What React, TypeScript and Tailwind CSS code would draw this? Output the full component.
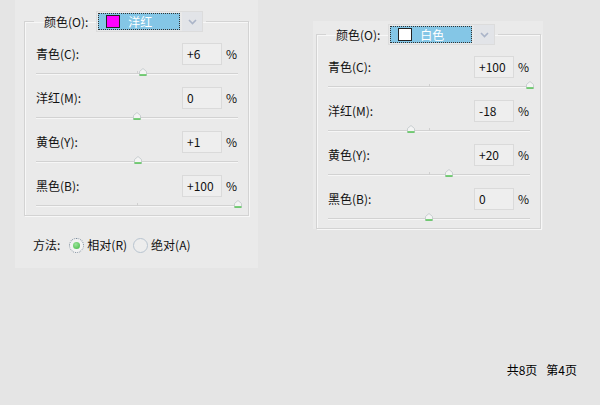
import type { ReactNode } from 'react'

const FONT = { fontFamily: '"Noto Sans CJK SC", "Liberation Sans", sans-serif' }

type Row = { label: string; value: string; pct: number }

const leftRows: Row[] = [
  { label: '青色(C):', value: '+6', pct: 6 },
  { label: '洋红(M):', value: '0', pct: 0 },
  { label: '黄色(Y):', value: '+1', pct: 1 },
  { label: '黑色(B):', value: '+100', pct: 100 },
]

const rightRows: Row[] = [
  { label: '青色(C):', value: '+100', pct: 100 },
  { label: '洋红(M):', value: '-18', pct: -18 },
  { label: '黄色(Y):', value: '+20', pct: 20 },
  { label: '黑色(B):', value: '0', pct: 0 },
]

function Thumb() {
  return (
    <svg width="10" height="10" viewBox="0 0 10 10">
      <path d="M1.5 8.5 V4.5 L5 1.5 L8.5 4.5 V8.5 Z" fill="#f4f4f4" stroke="#c8ced0" />
      <line x1="1.5" y1="8" x2="8.5" y2="8" stroke="#5cc65c" strokeWidth="1.6" />
    </svg>
  )
}

function Slider({ pct, last }: { pct: number; last?: boolean }) {
  const left = ((pct + 100) / 200) * 100
  return (
    <div className={`relative pt-[8px] ${last ? 'h-[18px]' : 'h-[22px]'}`}>
      <div className="h-[2px] border-t border-[#d2d2d2] border-b border-b-[#f6f6f6]" />
      <div className="absolute left-1/2 top-[6px] h-[3px] w-px bg-[#d0d0d0]" />
      <div className="absolute top-[2px] -ml-[5px]" style={{ left: `${left}%` }}>
        <Thumb />
      </div>
    </div>
  )
}

function ColorSelect({ swatch, text }: { swatch: string; text: string }) {
  return (
    <div className="flex h-[21px] w-[107px] items-center border border-[#dcdcdc] bg-[#e9e9e9] pl-[1px]">
      <div className="flex h-[17px] w-[82px] items-center border border-dotted border-[#333] bg-[#84c6e6] pl-[7px]">
        <div className="h-[13px] w-[14px] border border-[#222]" style={{ background: swatch }} />
        <span className="ml-[8px] text-[12px] leading-none text-white">{text}</span>
      </div>
      <div className="ml-[2px] flex h-[19px] w-[20px] items-center justify-center bg-[#e2e4e8]">
        <svg width="9" height="6" viewBox="0 0 9 6">
          <path d="M1 1 L4.5 4.5 L8 1" fill="none" stroke="#aab4c8" strokeWidth="1.6" />
        </svg>
      </div>
    </div>
  )
}

function Group({ swatch, text, rows }: { swatch: string; text: string; rows: Row[] }) {
  return (
    <fieldset className="w-[225px] border border-[#d3d3d3] pl-[11px] pr-[10px] shadow-[inset_1px_1px_0_#f7f7f7,1px_1px_0_#f7f7f7]">
      <legend className="ml-[-2px] flex items-center pl-[10px] pr-[3px]">
        <span className="text-[12px] text-[#111]">颜色(O):</span>
        <div className="ml-[8px]">
          <ColorSelect swatch={swatch} text={text} />
        </div>
      </legend>
      <div className="mt-[11px]">
        {rows.map((r, i) => (
          <div key={r.label}>
            <div className="flex h-[22px] items-center">
              <span className="flex-1 text-[12px] text-[#111]">{r.label}</span>
              <div className="flex h-[22px] w-[40px] items-center border border-[#dadada] bg-[#eeeeee] pl-[4px] text-[12px] text-[#111]">
                {r.value}
              </div>
              <span className="ml-[4px] w-[12px] text-[12px] text-[#111]">%</span>
            </div>
            <Slider pct={r.pct} last={i === rows.length - 1} />
          </div>
        ))}
      </div>
    </fieldset>
  )
}

function Radio({ checked, children }: { checked?: boolean; children: ReactNode }) {
  return (
    <div className="flex items-center">
      <div
        className={`flex h-[15px] w-[15px] items-center justify-center rounded-full border ${
          checked ? 'border-dotted border-[#7a8a9a] bg-[#f2f2f2]' : 'border-[#b8c4d0] bg-[#ededed]'
        }`}
      >
        {checked && <div className="h-[7px] w-[7px] rounded-full bg-[radial-gradient(circle_at_40%_35%,#9be49b,#3fb83f)]" />}
      </div>
      <span className="ml-[3px] text-[12px] text-[#111]">{children}</span>
    </div>
  )
}

export default function App() {
  return (
    <div className="flex h-[405px] w-[600px] flex-col bg-[#e5e5e5]" style={FONT}>
      <div className="flex items-start">
        <div className="ml-[15px] h-[268px] w-[243px] bg-[#eaeaea] px-[9px] pt-[11px]">
          <Group swatch="#ff00ff" text="洋红" rows={leftRows} />
          <div className="mt-[20px] flex items-center pl-[9px]">
            <span className="text-[12px] text-[#111]">方法:</span>
            <div className="ml-[9px] flex items-center gap-[6px]">
              <Radio checked>相对(R)</Radio>
              <Radio>绝对(A)</Radio>
            </div>
          </div>
        </div>
        <div className="ml-[55px] mt-[21px] h-[208px] w-[230px] bg-[#eaeaea] px-[3px] pt-[3px]">
          <Group swatch="#ffffff" text="白色" rows={rightRows} />
        </div>
      </div>
      <div className="flex-1" />
      <div className="flex justify-end pb-[26px] pr-[23px] text-[12px] text-[#000]">
        <span>共8页</span>
        <span className="ml-[9px]">第4页</span>
      </div>
    </div>
  )
}
